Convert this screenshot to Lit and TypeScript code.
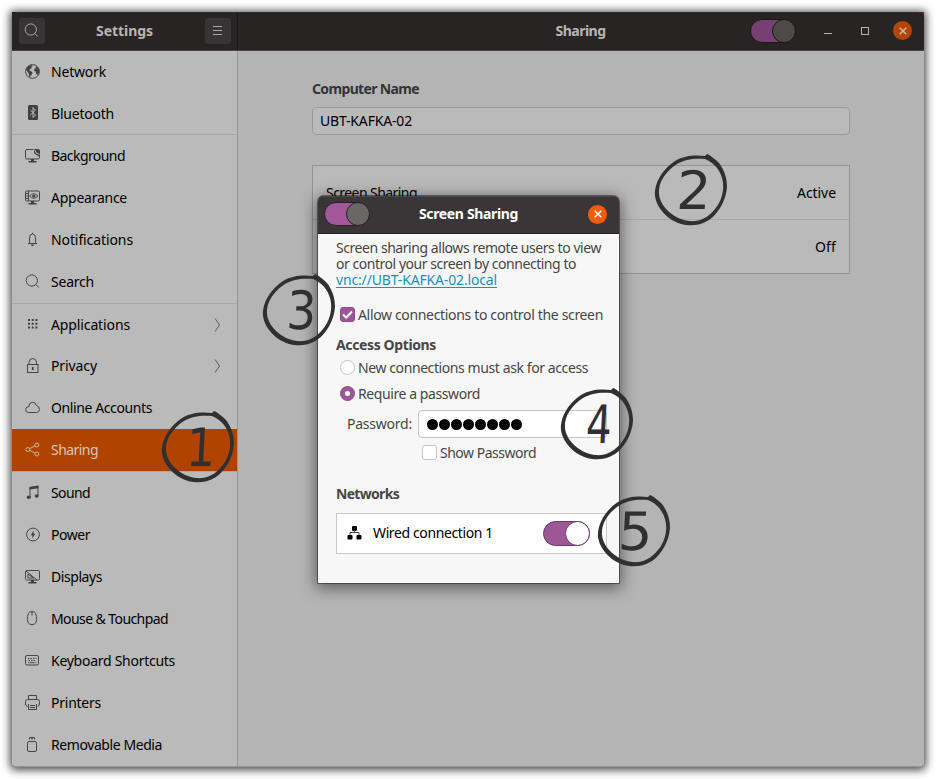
import { LitElement, html, css, svg } from "lit";
import { customElement, property } from "lit/decorators.js";
import { classMap } from "lit/directives/class-map.js";

/** One line of text, tracked so that it fills the given width. */
@customElement("fit-text")
class FitText extends LitElement {
  @property() text = "";
  @property({ type: Number }) w = 0;
  static styles = css`
    :host { display: inline-block; white-space: pre; flex: none; }
    span { display: inline-block; }
  `;
  updated() {
    const s = this.renderRoot.querySelector("span") as HTMLElement;
    s.style.letterSpacing = "0px";
    const natural = s.getBoundingClientRect().width;
    s.style.letterSpacing = (this.w - natural) / this.text.length + "px";
  }
  render() {
    return html`<span>${this.text}</span>`;
  }
}

const t = (text: string, w: number) => html`<fit-text .text=${text} .w=${w}></fit-text>`;

const icons: Record<string, unknown> = {
  network: svg`<circle cx="7.5" cy="7.5" r="6.9"/><path class="f" d="M1 6 2 3.5 4 1.8 6.5 1 7.8 2 6.2 3 6.8 4.2 5 5 4.2 6.2 6 7.2 7.6 8.4 6.8 10.6 5.4 12 5 13.6 4.2 12.5 3.8 9.4 2.4 7.6ZM10.2 2.6 12.2 3 13.8 5 14.4 8 12.8 11 11.2 9.8 10.6 7.4 9 6.6 9.2 4.8 11 4.4Z"/>`,
  bluetooth: svg`<rect class="f" x="3" y="0" width="10" height="15" rx="1.5"/><path class="lt" d="M5.3 5 10.5 10 8 12.5V2.5L10.5 5 5.3 10"/>`,
  background: svg`<path d="M8.5 1.5H2Q.5 1.5.5 3V9.500Q.5 11 2 11H13Q14.500 11 14.500 9.500V8"/><path class="f" d="M9 1H13Q15 1 15 3V8.500Q12.500 8.500 11.500 6.800 9 6.500 9 4Z"/><path class="lt" d="M9.500 1.500Q10 5.500 14.500 6.500"/><path class="f" d="M6 11H9V13H11.500V14.500H3.500V13H6Z"/>`,
  appearance: svg`<rect x=".5" y="1" width="14" height="10" rx="1.200"/><path d="M3.500 1V11M1 3.500H3M1 6H3M1 8.500H3M4.500 6Q8.500 1.500 13 6 8.500 10.500 4.500 6Z"/><circle class="f" cx="8.800" cy="6" r="1.600"/><path class="f" d="M6 11H9V13H11.500V14.500H3.500V13H6Z"/>`,
  bell: svg`<path d="M3 11.500H12M4.500 11.500V6Q4.500 2 7.500 2T10.500 6V11.500M7.500 2V.8"/><path class="f" d="M5.800 12.500H9.200Q8.800 14 7.500 14T5.800 12.500Z"/>`,
  search: svg`<circle cx="6.800" cy="6.500" r="5.600"/><path d="M10.800 10.500 13.800 13.500"/>`,
  apps: svg`<path class="f" d="M3 3H5V5H3ZM6.700 3H8.700V5H6.700ZM10.400 3H12.400V5H10.400ZM3 6.700H5V8.700H3ZM6.700 6.700H8.700V8.700H6.700ZM10.400 6.700H12.400V8.700H10.400ZM3 10.400H5V12.400H3ZM6.700 10.400H8.700V12.400H6.700ZM10.400 10.400H12.400V12.400H10.400Z"/>`,
  lock: svg`<rect x="2.500" y="6.500" width="10.500" height="8"/><path d="M4 6.500V4.500Q4 .5 7.700 .5T11.500 4.500V6.500"/><path class="f" d="M6.900 9H8.600V12H6.900Z"/>`,
  cloud: svg`<path d="M3.500 12.500Q.6 12.300.6 9.500.8 6.800 3.700 6.700 4 2.500 7.500 2.200 10.600 2.200 11.500 5.500 14.500 6.500 14.500 9.500 14.300 12.500 11.500 12.500Z"/>`,
  share: svg`<circle cx="2.800" cy="7.500" r="2"/><circle cx="11.800" cy="3" r="2"/><circle cx="11.800" cy="12" r="2"/><path d="M4.600 6.600 10 4M4.600 8.400 10 11"/>`,
  sound: svg`<path d="M5 12V2.500L13 1.200V10.500" /><path class="f" d="M4.500 2 13.500.6V3.200L4.500 4.400Z"/><ellipse class="f" cx="3.700" cy="12.200" rx="2" ry="1.700"/><ellipse class="f" cx="11.700" cy="11" rx="2" ry="1.700"/>`,
  power: svg`<circle cx="8" cy="7.500" r="6.400"/><path class="f" d="M8.600 3.500 5.700 8.300H7.500L7.200 11.500 10.300 6.800H8.400Z"/>`,
  displays: svg`<rect x=".5" y="1.500" width="14" height="9.500" rx="1.200"/><path d="M1 2 12 11M3 5V9H8.500Z"/><path class="f" d="M6 11H9V13H11.500V14.500H3.500V13H6Z"/>`,
  mouse: svg`<path d="M5 .8H9Q11 1.500 11.500 5.500 12 9 11 11.500 9.500 13.700 7 13.700T3 11.500Q2 9 2.500 5.500 3 1.500 5 .8ZM7 1V4.500"/>`,
  keyboard: svg`<rect x=".5" y="2.500" width="13" height="9.500" rx="1.500"/><path class="dash" d="M3 5.500H11.500M3.500 7.500H11"/><path d="M4.500 9.700H9.500M3 9.700H3.800M10.500 9.700H11.300"/>`,
  printer: svg`<path d="M3.500 4.500V.5H11.500V4.500M2.500 11.500Q.5 11 .5 9V6.500Q.7 4.500 2.700 4.500H12.300Q14.300 4.500 14.500 6.500V9Q14.500 11 12.500 11.500M3.500 9V14.500H11.500V9M5 10.500H10M5 12.500H10"/>`,
  usb: svg`<rect x="2.500" y="4.500" width="9" height="10" rx="1.500"/><path d="M4.500 2.500V.5H9.500V2.500M6 1.800H8"/>`,
};

interface Row { icon: string; label: string; w: number; arrow?: boolean; active?: boolean; short?: boolean }
const groups: Row[][] = [
  [
    { icon: "network", label: "Network", w: 55 },
    { icon: "bluetooth", label: "Bluetooth", w: 63, short: true },
  ],
  [
    { icon: "background", label: "Background", w: 74 },
    { icon: "appearance", label: "Appearance", w: 76 },
    { icon: "bell", label: "Notifications", w: 82 },
    { icon: "search", label: "Search", w: 43 },
  ],
  [
    { icon: "apps", label: "Applications", w: 79, arrow: true, short: true },
    { icon: "lock", label: "Privacy", w: 46, arrow: true },
    { icon: "cloud", label: "Online Accounts", w: 101 },
    { icon: "share", label: "Sharing", w: 47, active: true },
  ],
  [
    { icon: "sound", label: "Sound", w: 39 },
    { icon: "power", label: "Power", w: 39 },
    { icon: "displays", label: "Displays", w: 51 },
    { icon: "mouse", label: "Mouse & Touchpad", w: 117 },
    { icon: "keyboard", label: "Keyboard Shortcuts", w: 124 },
    { icon: "printer", label: "Printers", w: 50 },
    { icon: "usb", label: "Removable Media", w: 111 },
  ],
];

// Numbered markers on the free canvas: ring origin, then digit centre and scale within the ring.
const marks = [
  { n: "1", x: 162, y: 411, dx: 38, dy: 36, sx: 0.86 },
  { n: "2", x: 655, y: 154, dx: 38, dy: 36, sx: 1.02 },
  { n: "3", x: 263, y: 274, dx: 37.5, dy: 36, sx: 0.88 },
  { n: "4", x: 561, y: 388, dx: 37, dy: 35.5, sx: 0.76 },
  { n: "5", x: 598, y: 495, dx: 36.5, dy: 36, sx: 1.02 },
];

const cross = svg`<svg class="x" viewBox="0 0 10 10"><path d="M1.700 1.700 8.300 8.300M8.300 1.700 1.700 8.300"/></svg>`;

@customElement("app-root")
class AppRoot extends LitElement {
  static styles = css`
    :host { display: block; position: relative; width: 936px; height: 779px; overflow: hidden; background: #fff;
      font: 14px/16px "Noto Sans", sans-serif; color: #000; box-sizing: border-box; }
    * { box-sizing: border-box; }
    .frame { padding: 12px; }
    .window { display: flex; flex-direction: column; width: 912px; height: 755px; background: linear-gradient(90deg, #35102d, #7a1044);
      border-radius: 0 0 3px 3px; box-shadow: 0 1px 8px 2px rgba(0,0,0,.72); }
    .bar { display: flex; height: 39px; background: #282424; border-top: 1px solid #332b2f; border-bottom: 1px solid #464344;
      border-radius: 5px 5px 0 0; color: #b9b5b4; font-weight: 700; }
    .left { display: flex; align-items: center; justify-content: space-between; width: 226px; padding: 0 6px 1px 7px; border-right: 1px solid #1b1818; }
    .sq { display: flex; align-items: center; justify-content: center; width: 26px; height: 26px; border-radius: 3px; background: #383435; }
    .sq svg { stroke: #a9a6a6; fill: none; width: 15px; height: 15px; margin: 0 1px 1px 0; }
    .right { flex: 1; display: grid; grid-template-columns: 1fr auto 1fr; align-items: center; padding: 0 12px 2px 12px; }
    .left fit-text { margin-left: -1px; margin-bottom: 1px; }
    .right fit-text { margin-left: -1px; margin-top: 1px; }
    .controls { display: flex; justify-content: flex-end; align-items: center; }
    .min { width: 8px; height: 1px; background: #b5b2b1; margin: 5px 29px 0 28px; }
    .max { width: 8px; height: 8px; border: 1px solid #b5b2b1; margin-right: 24px; }
    .close { width: 19px; height: 19px; border-radius: 50%; display: flex; align-items: center; justify-content: center; background: #b64500; }
    .x { width: 10px; height: 10px; stroke: #cbb8ad; stroke-width: 1.5; fill: none; }
    .cols { flex: 1; display: flex; min-height: 0; border-radius: 0 0 3px 3px; overflow: hidden; border-bottom: 1px solid #979797; }
    .side { width: 226px; background: #bababa; border-right: 1px solid #969696; }
    .group + .group { border-top: 1px solid #a8a8a8; }
    .row { display: flex; align-items: center; height: 42px; padding: 0 16px 0 13px; gap: 11px; }
    .row.short { height: 41px; }
    .row fit-text { flex: 1; }
    .row.active { background: #b04300; color: #d8c5ba; }
    .ic { width: 15px; height: 15px; fill: none; stroke: #454545; flex: none; overflow: visible; margin-bottom: 2px; }
    .ic .f { fill: #404040; stroke: none; }
    .ic .lt { stroke: #bababa; }
    .ic .dash { stroke-dasharray: 1.5 1; }
    .active .ic { stroke: #d0b3a2; }
    .arrow { width: 7px; height: 14px; stroke: #5c5c5c; fill: none; flex: none; }
    .main { flex: 1; background: #b4b4b4; padding: 30px 0 0 74px; }
    .main .wrap { width: 538px; }
    .title { height: 16px; color: #343434; font-weight: 700; }
    .entry { margin-top: 10px; height: 28px; border: 1px solid #999; border-radius: 4px; background: #bababa; padding: 5px 7px; }
    .list { margin-top: 30px; height: 109px; border: 1px solid #949494; background: #bababa; display: flex; flex-direction: column; }
    .item { flex: 1; display: flex; align-items: center; justify-content: space-between; padding: 1px 13px 0; }
    .item.end { justify-content: flex-end; }
    .item + .item { border-top: 1px solid #a8a8a8; }
    .switch { width: 46px; height: 24px; border: 1px solid #1b1819; border-radius: 12px; background: #773f72; display: flex; justify-content: flex-end; }
    .knob { width: 24px; height: 24px; margin: -1px; border-radius: 50%; border: 1px solid #191717; background: #4e4a48; }
    .dialog { position: absolute; left: 318px; top: 196px; width: 301px; height: 387px; border-radius: 6px 6px 0 0; background: #f7f7f7; color: #464646;
      box-shadow: 0 0 0 1px rgba(0,0,0,.4), 0 3px 15px 2px rgba(0,0,0,.5); }
    .dbar { display: grid; grid-template-columns: 1fr auto 1fr; align-items: center; height: 38px; padding: 0 12px 1px 6px; border-radius: 5px 5px 0 0;
      background: #3a3637; border-bottom: 1px solid #242222; box-shadow: inset 0 1px #4c4849; color: #fff; font-weight: 700; }
    .dbar fit-text { margin: 0 -3px 0 3px; }
    .dbar .switch { background: #a0589a; border-color: #242122; }
    .dbar .knob { background: #6b6764; border-color: #242122; }
    .dbar .close { background: #f15d0c; justify-self: end; }
    .dbar .x { stroke: #fff; }
    .dbody { padding: 6px 12px 0 18px; }
    .line { display: block; height: 16px; }
    .link { color: #1791bd; display: block; height: 16px; }
    .link fit-text { border-bottom: 1px solid #1791bd; height: 16px; }
    .opt { display: flex; align-items: center; gap: 4px; height: 16px; padding-left: 3px; }
    .box { width: 15px; height: 15px; border: 1px solid #c6c6c6; border-radius: 3px; background: #fff; flex: none; display: flex; margin: 0 -.5px 1px .5px; }
    .box.on { background: #9c5896; border-color: #924c8c; }
    .box svg { width: 13px; height: 13px; fill: none; stroke: #fff; stroke-width: 2; }
    .box.round { border-radius: 50%; align-items: center; justify-content: center; }
    .dot { width: 5px; height: 5px; border-radius: 50%; background: #fff; }
    .h { font-weight: 700; height: 16px; }
    .pw { display: flex; align-items: center; margin: 8px 0 0 11px; justify-content: space-between; width: 260px; }
    .pwbox { width: 189px; height: 28px; border: 1px solid #c6c6c6; border-radius: 4px; background: #fff; display: flex; align-items: center; gap: .900px; padding: 1px 0 0 7.500px; }
    .b { width: 11.200px; height: 11.200px; border-radius: 50%; background: #000; }
    .net { margin-top: 11px; width: 271px; height: 41px; border: 1px solid #c9c9c9; background: #fff; color: #000; display: flex; align-items: center; padding: 0 16px 1px 10px; }
    .net svg { width: 15px; height: 14px; margin-right: 11px; stroke: #444; fill: none; }
    .net .f { fill: #000; stroke: none; }
    .net fit-text { flex: 1; }
    .net .switch { width: 47px; height: 25px; border-color: #6d3b69; background: #9c5896; border-radius: 13px; }
    .net .knob { width: 25px; height: 25px; background: #fff; border-color: #6d3b69; }
    .mark { position: absolute; width: 73px; height: 73px; overflow: visible; }
    .mark path { fill: #303030; fill-rule: evenodd; }
    .mark text { font: 53px "DejaVu Sans", sans-serif; fill: #303030; text-anchor: middle; }
  `;

  render() {
    const knob = html`<div class="switch"><div class="knob"></div></div>`;
    return html`
      <div class="frame"><div class="window">
        <div class="bar">
          <div class="left">
            <div class="sq"><svg viewBox="0 0 15 15">${icons.search}</svg></div>
            ${t("Settings", 57)}
            <div class="sq"><svg viewBox="0 0 15 15"><path d="M3 3.500H12M3 7.500H12M3 11.500H12" /></svg></div>
          </div>
          <div class="right">
            <span></span>${t("Sharing", 50)}
            <div class="controls">${knob}<div class="min"></div><div class="max"></div><div class="close">${cross}</div></div>
          </div>
        </div>
        <div class="cols">
          <div class="side">
            ${groups.map((g) => html`<div class="group">${g.map((r) => html`
              <div class=${classMap({ row: true, active: !!r.active, short: !!r.short })}>
                <svg class="ic" viewBox="0 0 15 15">${icons[r.icon]}</svg>${t(r.label, r.w)}
                ${r.arrow ? html`<svg class="arrow" viewBox="0 0 7 14"><path d="M1 .5 5.500 7 1 13.500" /></svg>` : ""}
              </div>`)}</div>`)}
          </div>
          <div class="main"><div class="wrap">
            <div class="title">${t("Computer Name", 107)}</div>
            <div class="entry">${t("UBT-KAFKA-02", 92)}</div>
            <div class="list">
              <div class="item">${t("Screen Sharing", 91)}${t("Active", 39)}</div>
              <div class="item end">${t("Off", 21)}</div>
            </div>
          </div></div>
        </div>
      </div></div>

      <div class="dialog">
        <div class="dbar">${knob}${t("Screen Sharing", 99)}<div class="close">${cross}</div></div>
        <div class="dbody">
          <div class="line">${t("Screen sharing allows remote users to view", 265)}</div>
          <div class="line">${t("or control your screen by connecting to", 240)}</div>
          <div class="link">${t("vnc://UBT-KAFKA-02.local", 161)}</div>
          <div class="opt" style="margin-top:19px"><div class="box on"><svg viewBox="0 0 13 13"><path d="M2 6.500 5.200 9.500 11 3.500" /></svg></div>${t("Allow connections to control the screen", 245)}</div>
          <div class="h" style="margin-top:14px">${t("Access Options", 100)}</div>
          <div class="opt" style="margin-top:7px"><div class="box round"></div>${t("New connections must ask for access", 230)}</div>
          <div class="opt" style="margin-top:10px"><div class="box round on"><div class="dot"></div></div>${t("Require a password", 122)}</div>
          <div class="pw">${t("Password:", 65)}<div class="pwbox">${Array.from({ length: 8 }, () => html`<div class="b"></div>`)}</div></div>
          <div class="opt" style="margin:7px 0 0 82px"><div class="box"></div>${t("Show Password", 96)}</div>
          <div class="h" style="margin-top:25px">${t("Networks", 63)}</div>
          <div class="net">
            <svg viewBox="0 0 15 14"><rect class="f" x="5" y="0" width="5" height="5" rx="1"/><rect class="f" x=".5" y="9" width="5" height="4.500" rx="1"/><rect class="f" x="9.500" y="9" width="5" height="4.500" rx="1"/><path d="M7.500 4V6.500M3 9V6.500H12V9"/></svg>
            ${t("Wired connection 1", 120)}${knob}
          </div>
        </div>
      </div>

      ${marks.map((m) => html`<svg class="mark" viewBox="0 0 73 73" style="left:${m.x}px;top:${m.y}px">
        <path d="M52 0C55 1 60 5 64 9 70 17 72 25 72 33 71 47 63 60 54 66 46 71 38 72 31 71 16 69 2 56 0 42-1 28 9 14 20 7 30 1 41 1 50 2ZM50 5C40 4 30 5 22 10 11 17 3 28 4 40 5 52 18 65 34 67 44 68 53 64 60 55 66 48 69 38 68 29 67 19 61 11 54 7Z"/>
        <text transform="translate(${m.dx} ${m.dy + 19}) skewX(-3) scale(${m.sx} 1)">${m.n}</text>
      </svg>`)}
    `;
  }
}
